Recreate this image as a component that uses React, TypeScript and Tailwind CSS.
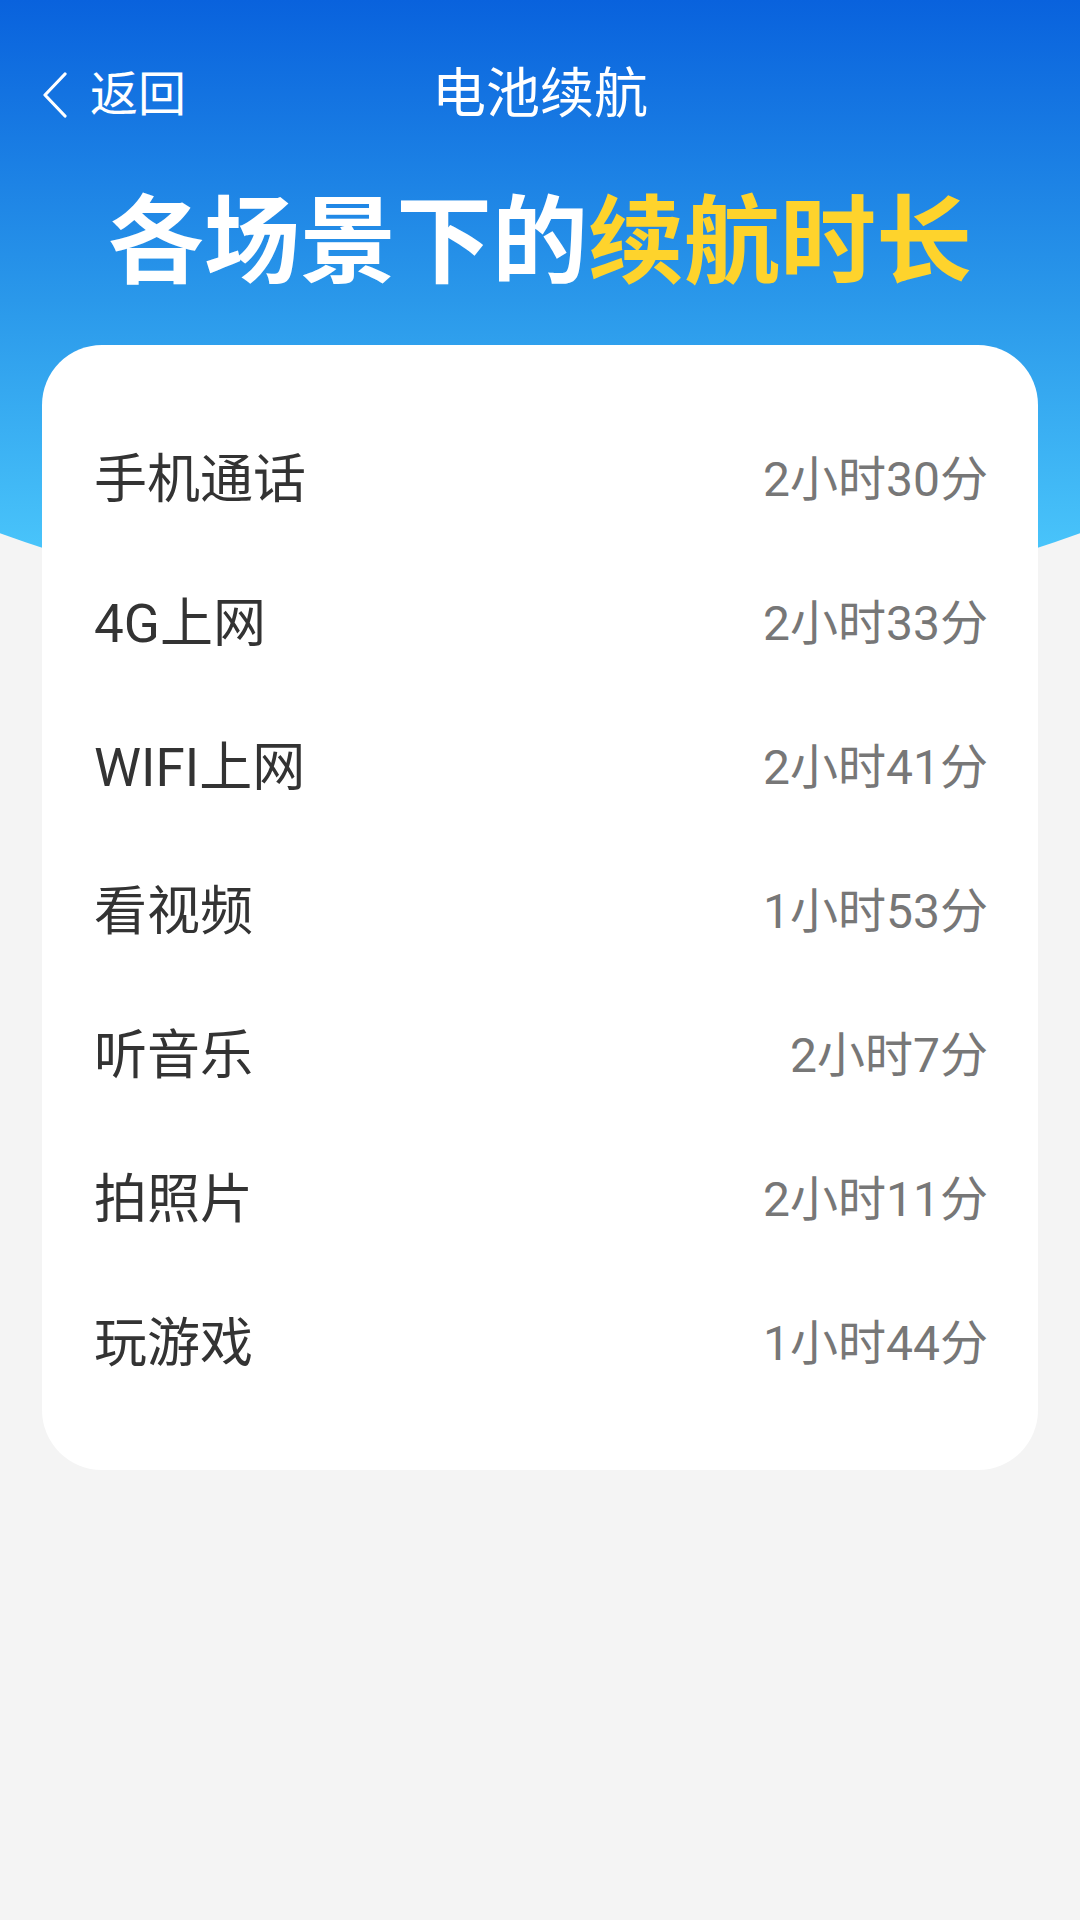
import React from "react";

const rows = [
  { name: "手机通话", time: "2小时30分" },
  { name: "4G上网", time: "2小时33分" },
  { name: "WIFI上网", time: "2小时41分" },
  { name: "看视频", time: "1小时53分" },
  { name: "听音乐", time: "2小时7分" },
  { name: "拍照片", time: "2小时11分" },
  { name: "玩游戏", time: "1小时44分" },
];

const font = "font-['Roboto','Noto_Sans_CJK_SC',sans-serif]";

export default function App() {
  return (
    <div className={`min-h-[1920px] w-[1080px] bg-[#f4f4f4] ${font}`}>
      {/* Header */}
      <div className="h-[624px] bg-[linear-gradient(180deg,#0962dd_0px,#2a98ea_300px,#4ac6fb_560px)] [clip-path:ellipse(1040px_624px_at_50%_0)]">
        <div className="grid h-[112px] grid-cols-[1fr_auto_1fr] items-center pt-[39px] box-content">
          <button className="flex items-center gap-[22px] pl-[42px] text-white">
            <svg width="26" height="46" viewBox="0 0 26 46" fill="none">
              <polyline
                points="23,2 3,23 23,44"
                stroke="white"
                strokeWidth="3.2"
                strokeLinecap="round"
                strokeLinejoin="round"
              />
            </svg>
            <span className="text-[48px] leading-none">返回</span>
          </button>
          <h1 className="text-[54px] leading-none text-white">电池续航</h1>
          <div />
        </div>
        <h2 className="mt-[34px] text-center text-[96px] font-bold leading-[1.2] text-white">
          各场景下的<span className="text-[#fed32c]">续航时长</span>
        </h2>
      </div>

      {/* Card */}
      <div className="relative mx-[42px] -mt-[279px] rounded-[60px] bg-white pb-[54px] pl-[52px] pr-[50px] pt-[63px]">
        {rows.map((r) => (
          <div key={r.name} className="flex h-[144px] items-center justify-between">
            <span className="text-[53px] leading-none text-[#333333]">{r.name}</span>
            <span className="text-[48px] leading-none text-[#777777]">{r.time}</span>
          </div>
        ))}
      </div>
    </div>
  );
}
